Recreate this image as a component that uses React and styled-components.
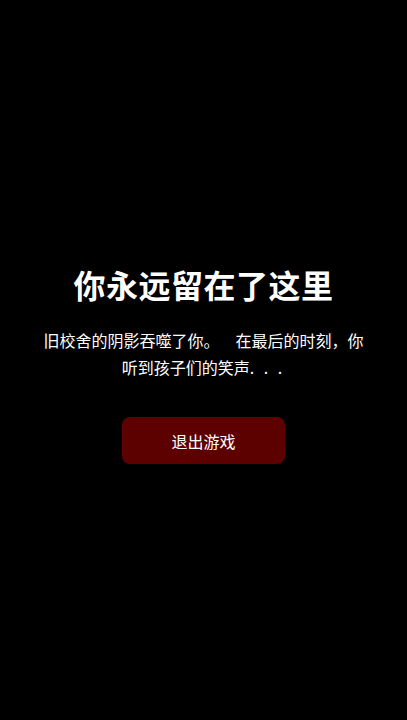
import React from 'react';
import styled, { createGlobalStyle } from 'styled-components';

const GlobalStyle = createGlobalStyle`
  html, body {
    margin: 0;
    padding: 0;
    background: #000;
  }
  body {
    font-family: "Noto Sans CJK SC", sans-serif;
  }
`;

const Screen = styled.div`
  min-height: 720px;
  width: 100%;
  background: #000;
  display: flex;
  flex-direction: column;
  align-items: center;
  justify-content: center;
  padding-top: 9px;
  box-sizing: border-box;
  text-align: center;
  color: #fff;
`;

const Title = styled.h1`
  margin: 0;
  font-size: 32px;
  letter-spacing: 0.5px;
  line-height: 38px;
  font-weight: 700;
  font-family: "Noto Sans CJK SC", sans-serif;
  color: #fff;
`;

const Story = styled.p`
  margin: 24px 0 0;
  width: 330px;
  font-size: 16px;
  line-height: 27px;
  font-family: "Noto Sans CJK SC", sans-serif;
  color: #fff;
`;

const Pause = styled.span`
  display: inline-block;
  width: 1em;
`;

const Dots = styled.span`
  letter-spacing: 3px;
`;

const ExitButton = styled.button`
  margin-top: 36px;
  width: 163px;
  height: 47px;
  border: none;
  border-radius: 8px;
  background: #5c0000;
  color: #fff;
  font-family: "Noto Sans CJK SC", sans-serif;
  font-size: 16px;
  cursor: pointer;
`;

export default function App() {
  return (
    <>
      <GlobalStyle />
      <Screen>
        <Title>你永远留在了这里</Title>
        <Story>
          旧校舍的阴影吞噬了你。<Pause />在最后的时刻，你听到孩子们的笑声<Dots>. . .</Dots>
        </Story>
        <ExitButton>退出游戏</ExitButton>
      </Screen>
    </>
  );
}
